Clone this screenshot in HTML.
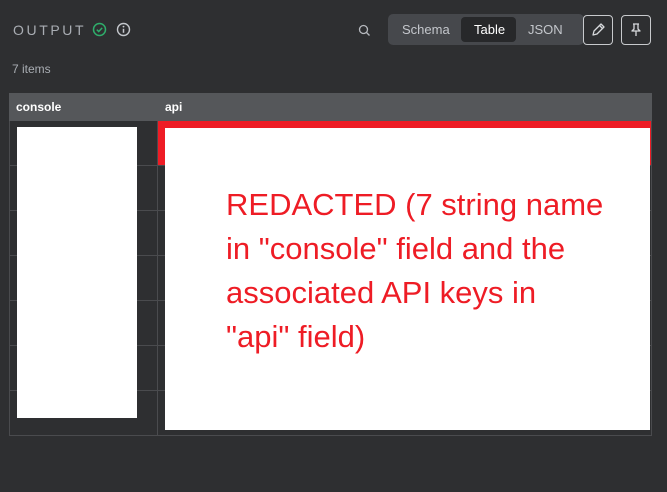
<!DOCTYPE html>
<html><head><style>
*{margin:0;padding:0;box-sizing:border-box}
body{width:667px;height:492px;background:#2e2f31;font-family:"Liberation Sans",sans-serif;position:relative;overflow:hidden}
.a{position:absolute}
.hdr{color:#a9adb3;font-size:14px;letter-spacing:2.6px;left:13px;top:22px}
.seg{left:388px;top:14px;width:196px;height:31px;background:#46484c;border-radius:5px}
.seg span{position:absolute;top:8px;font-size:13px;color:#c4c7cc}
.btn{top:15px;width:30px;height:30px;border:1px solid #c8cacd;border-radius:4px}
.line{background:#4a4b4e}
</style></head><body>
<div class="a hdr">OUTPUT</div>
<svg class="a" style="left:92px;top:22px" width="15" height="15" viewBox="0 0 15 15"><circle cx="7.5" cy="7.5" r="6" fill="none" stroke="#2fae6b" stroke-width="1.5"/><path d="M4.8 7.6l1.9 1.9 3.5-3.6" fill="none" stroke="#2fae6b" stroke-width="1.5"/></svg>
<svg class="a" style="left:116px;top:22px" width="15" height="15" viewBox="0 0 15 15"><circle cx="7.5" cy="7.5" r="6" fill="none" stroke="#c4c7cc" stroke-width="1.4"/><path d="M7.5 6.8v4" stroke="#c4c7cc" stroke-width="1.5"/><circle cx="7.5" cy="4.6" r="0.9" fill="#c4c7cc"/></svg>
<svg class="a" style="left:358px;top:24px" width="13" height="13" viewBox="0 0 13 13"><circle cx="5.5" cy="5.5" r="4" fill="none" stroke="#b6b9be" stroke-width="1.3"/><path d="M8.5 8.5l3 3" stroke="#b6b9be" stroke-width="1.3"/></svg>
<div class="a seg"><span style="left:14px">Schema</span><div class="a" style="left:73px;top:3px;width:55px;height:25px;background:#27282a;border-radius:4px"></div><span style="left:86px;color:#fff">Table</span><span style="left:140px">JSON</span></div>
<div class="a btn" style="left:583px"><svg width="28" height="28" viewBox="0 0 28 28"><path d="M9 19l1-4 7-7 3 3-7 7z M15.5 9.5l3 3" fill="none" stroke="#d6d8db" stroke-width="1.3" stroke-linejoin="round"/></svg></div>
<div class="a btn" style="left:621px"><svg width="28" height="28" viewBox="0 0 28 28"><path d="M11 8h6 M12 8v5l-2 2h8l-2-2V8 M14 15v5" fill="none" stroke="#d6d8db" stroke-width="1.3" stroke-linejoin="round"/></svg></div>
<div class="a" style="left:12px;top:62px;font-size:12px;color:#a9adb3">7 items</div>
<div class="a" style="left:9px;top:93px;width:643px;height:343px;border:1px solid #4a4b4e;background:#2e2f31"></div>
<div class="a" style="left:9px;top:93px;width:643px;height:28px;background:#55575a"></div>
<div class="a" style="left:16px;top:100px;font-size:12px;font-weight:bold;color:#fff">console</div>
<div class="a" style="left:165px;top:100px;font-size:12px;font-weight:bold;color:#fff">api</div>
<div class="a line" style="left:157px;top:121px;width:1px;height:314px"></div>
<div class="a line" style="left:10px;top:165px;width:642px;height:1px"></div>
<div class="a line" style="left:10px;top:210px;width:642px;height:1px"></div>
<div class="a line" style="left:10px;top:255px;width:642px;height:1px"></div>
<div class="a line" style="left:10px;top:300px;width:642px;height:1px"></div>
<div class="a line" style="left:10px;top:345px;width:642px;height:1px"></div>
<div class="a line" style="left:10px;top:390px;width:642px;height:1px"></div>
<div class="a" style="left:158px;top:121px;width:493px;height:44px;background:#ee1c25"></div>
<div class="a" style="left:17px;top:127px;width:120px;height:291px;background:#fff"></div>
<div class="a" style="left:165px;top:128px;width:485px;height:302px;background:#fff"></div>
<div class="a" style="left:226px;top:183px;font-size:31px;line-height:44px;color:#ee1c25;width:424px;white-space:nowrap">REDACTED (7 string name<br>in "console" field and the<br>associated API keys in<br>"api" field)</div>
</body></html>
